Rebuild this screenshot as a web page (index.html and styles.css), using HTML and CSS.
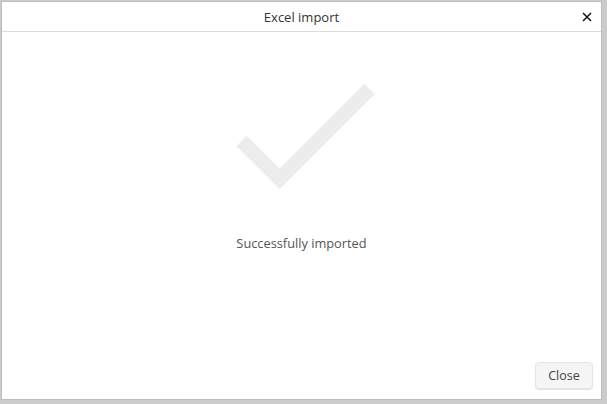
FILE: index.html
```html
<!DOCTYPE html>
<html>
<head>
<meta charset="utf-8">
<link rel="stylesheet" href="styles.css">
</head>
<body>
<div class="dialog">
  <div class="header">
    <div class="title">Excel import</div>
    <button class="x" aria-label="Close">
      <svg width="10" height="10" viewBox="0 0 10 10"><path d="M1 1L9 9M9 1L1 9" stroke="#111" stroke-width="1.5" fill="none"/></svg>
    </button>
  </div>
  <div class="content">
    <svg class="check" width="150" height="120" viewBox="0 0 150 120"><polyline points="13.5,60 51.5,98 141.5,8" fill="none" stroke="#ececec" stroke-width="14.5"/></svg>
    <div class="msg">Successfully imported</div>
  </div>
  <div class="footer">
    <button class="btn">Close</button>
  </div>
</div>
</body>
</html>
```
FILE: styles.css
```css
html, body { margin: 0; padding: 0; }
body {
  width: 607px; height: 404px;
  background: #cbcbcb;
  font-family: "Open Sans", "Liberation Sans", sans-serif;
  overflow: hidden;
}
.dialog {
  box-sizing: border-box;
  margin: 1px 0 0 1px;
  width: 601px; height: 399px;
  background: #fff;
  border: 1px solid #bdbdbd;
  display: flex; flex-direction: column;
}
.header {
  height: 29px;
  border-bottom: 1px solid #dcdcdc;
  display: flex; align-items: center; justify-content: center;
  position: relative;
}
.title { font-size: 13px; color: #333; }
.x {
  position: absolute; right: 9px; top: 10px;
  border: 0; background: none; padding: 0; width: 10px; height: 10px;
  display: flex;
}
.content {
  flex: 1;
  display: flex; flex-direction: column; align-items: center;
}
.check { margin-top: 49px; margin-left: 3px; display: block; }
.msg { margin-top: 33px; font-size: 12.8px; color: #555; line-height: 18px; }
.footer {
  display: flex; justify-content: flex-end;
  padding: 0 8px 10px 0;
}
.btn {
  font-family: inherit; font-size: 12.5px; color: #444;
  width: 58px; height: 27px;
  background: #f5f5f5;
  border: 1px solid #e6e6e6;
  border-radius: 4px;
  box-shadow: 0 1px 1px rgba(0,0,0,0.12);
  padding: 0;
}
```
